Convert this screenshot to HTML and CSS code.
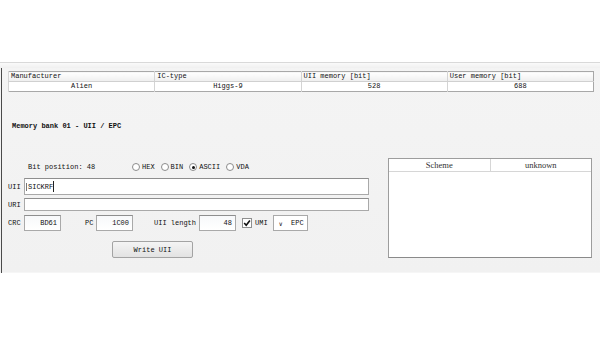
FILE: index.html
```html
<!DOCTYPE html>
<html lang="en">
<head>
    <meta charset="UTF-8">
    <title>Memory bank 01 - UII / EPC</title>
    <link rel="stylesheet" href="styles.css">
</head>
<body>
    <div class="window">
        <div class="topbar"></div>
        <div class="pane">
            <!-- tag info -->
            <table class="info">
                <tr class="head">
                    <th>Manufacturer</th>
                    <th>IC-type</th>
                    <th>UII memory [bit]</th>
                    <th>User memory [bit]</th>
                </tr>
                <tr>
                    <td>Alien</td>
                    <td>Higgs-9</td>
                    <td>528</td>
                    <td>688</td>
                </tr>
            </table>

            <div class="title">Memory bank 01 - UII / EPC</div>

            <div class="main">
                <div class="form">
                    <div class="bits">
                        <span class="bitpos">Bit position: 48</span>
                        <div class="radios">
                            <span class="radio"><i></i>HEX</span>
                            <span class="radio"><i></i>BIN</span>
                            <span class="radio on"><i></i>ASCII</span>
                            <span class="radio"><i></i>VDA</span>
                        </div>
                    </div>

                    <div class="row uii">
                        <span class="lbl">UII</span>
                        <div class="field wide"><span class="caret-box">SICKRF</span><b class="caret"></b></div>
                    </div>
                    <div class="row uri">
                        <span class="lbl">URI</span>
                        <div class="field wide"></div>
                    </div>

                    <div class="row codes">
                        <span class="lbl">CRC</span>
                        <div class="field num">BD61</div>
                        <span class="lbl pc">PC</span>
                        <div class="field num">1C00</div>
                        <span class="lbl len">UII length</span>
                        <div class="field num">48</div>
                        <span class="check">
                            <svg width="10" height="10" viewBox="0 0 10 10"><rect x="0.5" y="0.5" width="9" height="9" fill="#fff" stroke="#8e8f8f"/><path d="M2.2 5 L4.2 7.3 L7.9 2.4" fill="none" stroke="#111" stroke-width="1.6"/></svg>
                            UMI
                        </span>
                        <div class="select"><span>&#8744;</span>EPC</div>
                    </div>

                    <button class="btn">Write UII</button>
                </div>

                <div class="scheme">
                    <div class="scheme-head">
                        <span>Scheme</span>
                        <span>unknown</span>
                    </div>
                </div>
            </div>
        </div>
    </div>
</body>
</html>
```

FILE: styles.css
```css
body {
    margin: 0;
    background: #fff;
    font-family: 'Liberation Mono', 'DejaVu Sans Mono', monospace;
    font-size: 7px;
    color: #111;
}

.window {
    margin-top: 62px;
    height: 209px;
    background: linear-gradient(180deg, #f4f4f4, #f1f1f1);
    border-top: 1px solid #d9d9d9;
    border-bottom: 1px solid #f6f6f6;
}

.topbar {
    height: 5px;
    background: linear-gradient(180deg, #fafafa, #f0f0f0);
}

.pane {
    margin-left: 1px;
    height: 203px;
    border-left: 1px solid #4a4a4a;
    padding: 3px 7px 0 6px;
}

/* tag info table */
.info {
    width: 586px;
    table-layout: fixed;
    border-collapse: collapse;
    border: 1px solid #a8a8a8;
    background: #fff;
}

.info th,
.info td {
    height: 9px;
    padding: 0 2px;
    border-left: 1px solid #d4d4d4;
    line-height: 9px;
    font-weight: normal;
    white-space: nowrap;
}

.info th {
    text-align: left;
    background: linear-gradient(180deg, #ffffff, #eeeeee);
    border-bottom: 1px solid #d0d0d0;
}

.info td {
    text-align: center;
}

.title {
    margin-top: 30px;
    padding-left: 4px;
    font-weight: bold;
    line-height: 9px;
}

.main {
    display: flex;
    margin-top: 27px;
}

.form {
    width: 362px;
    padding-top: 4px;
}

.bits {
    display: flex;
    align-items: center;
    height: 10px;
    padding-left: 20px;
}

.bitpos {
    width: 104px;
}

.radios {
    display: flex;
    gap: 6px;
}

.radio {
    display: flex;
    align-items: center;
    gap: 2px;
}

.radio i {
    width: 6px;
    height: 6px;
    border: 1px solid #8c8c8c;
    border-radius: 50%;
    background: #fff;
    display: flex;
    align-items: center;
    justify-content: center;
}

.radio.on i::after {
    content: "";
    width: 3px;
    height: 3px;
    border-radius: 50%;
    background: #111;
}

.row {
    display: flex;
    align-items: center;
}

.lbl {
    width: 16px;
    flex: none;
}

.field {
    box-sizing: border-box;
    background: #fff;
    border: 1px solid #a9a9a9;
    border-top-color: #8e8e8e;
    display: flex;
    align-items: center;
}

.uii {
    margin-top: 6px;
}

.uii .field {
    height: 17px;
}

.uri {
    margin-top: 3px;
}

.uri .field {
    height: 13px;
}

.wide {
    width: 345px;
    padding-left: 1px;
}

.caret-box {
    border-left: 1px solid #777;
    padding-left: 1px;
}

.caret {
    width: 1px;
    height: 11px;
    background: #222;
}

.codes {
    margin-top: 4px;
}

.num {
    height: 16px;
    width: 37px;
    justify-content: flex-end;
    padding-right: 3px;
    background: linear-gradient(180deg, #f7f8fa, #ffffff);
}

.pc {
    width: 11px;
    margin-left: 24px;
}

.len {
    width: 45px;
    margin-left: 21px;
}

.check {
    display: flex;
    align-items: center;
    gap: 3px;
    margin-left: 6px;
}

.select {
    box-sizing: border-box;
    height: 16px;
    width: 35px;
    margin-left: 5px;
    border: 1px solid #a9a9a9;
    background: #fff;
    display: flex;
    align-items: center;
    padding-left: 5px;
    gap: 8px;
}

.select span {
    font-family: 'DejaVu Sans', sans-serif;
    font-size: 6px;
}

.btn {
    display: block;
    margin: 10px 0 0 104px;
    width: 81px;
    height: 17px;
    padding: 0;
    font-family: inherit;
    font-size: 7px;
    color: #111;
    border: 1px solid #a3a3a3;
    border-radius: 2px;
    background: linear-gradient(180deg, #f4f4f4, #e2e2e2);
}

/* scheme box */
.scheme {
    box-sizing: border-box;
    width: 204px;
    height: 100px;
    margin-left: 18px;
    background: #fff;
    border: 1px solid #9d9d9d;
    border-bottom-color: #8a8a8a;
}

.scheme-head {
    display: flex;
    height: 12px;
    border-bottom: 1px solid #d6d6d6;
    font-family: 'Liberation Serif', serif;
    font-size: 8.5px;
    color: #333;
}

.scheme-head span {
    flex: 1;
    text-align: center;
    line-height: 12px;
}

.scheme-head span + span {
    border-left: 1px solid #d6d6d6;
}
```
